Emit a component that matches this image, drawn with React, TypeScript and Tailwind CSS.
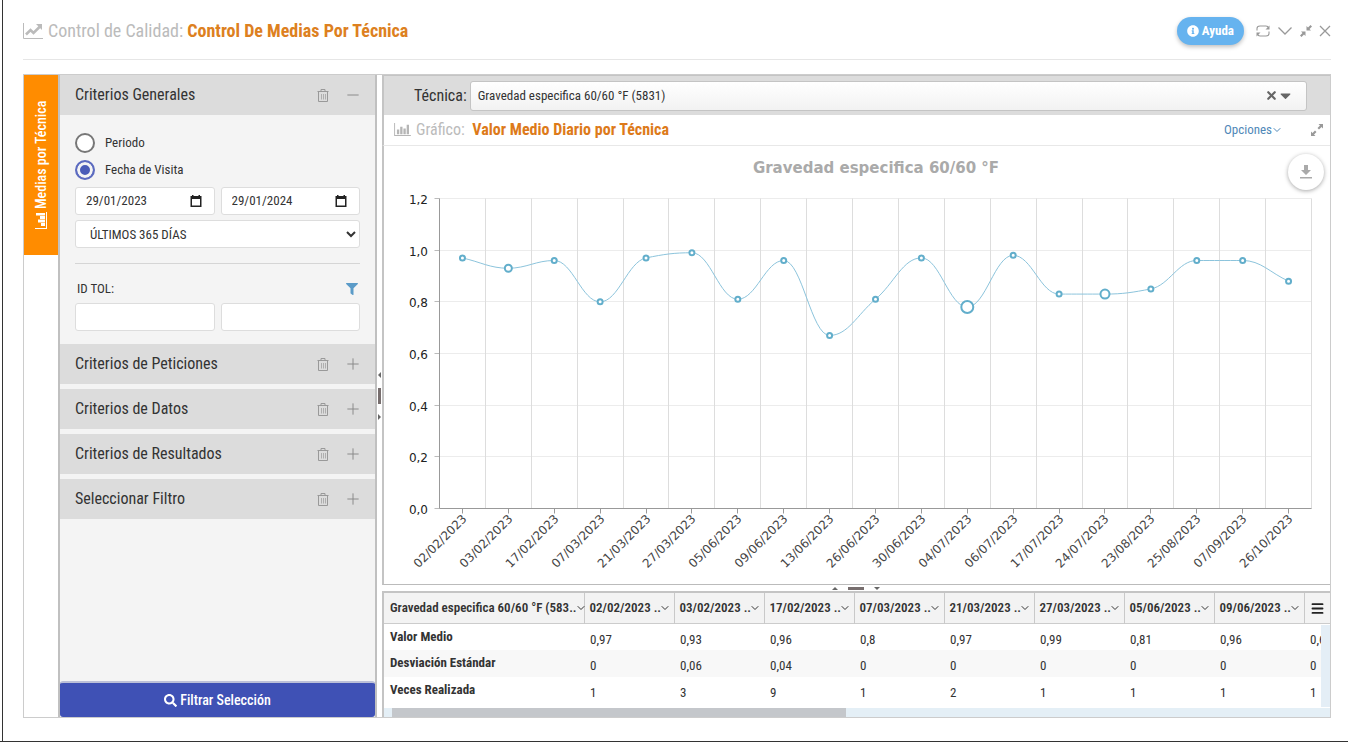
import { useState } from 'react'
import { FaCaretDown, FaFilter, FaInfoCircle, FaSearch } from 'react-icons/fa'
import { ChevronDown, Menu, Minus, Plus, X } from 'lucide-react'

const POINTS = [
  { date: '02/02/2023', value: 0.97, count: 1 },
  { date: '03/02/2023', value: 0.93, count: 3 },
  { date: '17/02/2023', value: 0.96, count: 1 },
  { date: '07/03/2023', value: 0.8, count: 1 },
  { date: '21/03/2023', value: 0.97, count: 1 },
  { date: '27/03/2023', value: 0.99, count: 1 },
  { date: '05/06/2023', value: 0.81, count: 1 },
  { date: '09/06/2023', value: 0.96, count: 1 },
  { date: '13/06/2023', value: 0.67, count: 1 },
  { date: '26/06/2023', value: 0.81, count: 1 },
  { date: '30/06/2023', value: 0.97, count: 1 },
  { date: '04/07/2023', value: 0.78, count: 9 },
  { date: '06/07/2023', value: 0.98, count: 1 },
  { date: '17/07/2023', value: 0.83, count: 1 },
  { date: '24/07/2023', value: 0.83, count: 5 },
  { date: '23/08/2023', value: 0.85, count: 1 },
  { date: '25/08/2023', value: 0.96, count: 1 },
  { date: '07/09/2023', value: 0.96, count: 1 },
  { date: '26/10/2023', value: 0.88, count: 1 },
]

const COLUMNS = [
  '02/02/2023', '03/02/2023', '17/02/2023', '07/03/2023',
  '21/03/2023', '27/03/2023', '05/06/2023', '09/06/2023',
]

const ROWS = [
  { name: 'Valor Medio', values: ['0,97', '0,93', '0,96', '0,8', '0,97', '0,99', '0,81', '0,96', '0,67'] },
  { name: 'Desviación Estándar', values: ['0', '0,06', '0,04', '0', '0', '0', '0', '0', '0'] },
  { name: 'Veces Realizada', values: ['1', '3', '9', '1', '2', '1', '1', '1', '1'] },
]

const SECTIONS = ['Criterios de Peticiones', 'Criterios de Datos', 'Criterios de Resultados', 'Seleccionar Filtro']

function LineIcon({ className }: { className: string }) {
  return (
    <svg viewBox="0 0 20 16" className={className} fill="none" stroke="currentColor">
      <path d="M.5 0v15.5H20" strokeWidth="1" />
      <path d="M3 11.5l4.5-4.5 3 3L17 3.5" strokeWidth="2.6" />
      <path d="M13 1h6v6z" fill="currentColor" stroke="none" />
    </svg>
  )
}

function BarsIcon({ className }: { className: string }) {
  return (
    <svg viewBox="0 0 18 14" className={className} fill="currentColor">
      <path d="M0 0h1v13h17v1H0zM3 7h2.500v5H3zM6.500 4H9v8H6.500zM10 6h2.500v6H10zM13.500 2H16v10h-2.500z" />
    </svg>
  )
}

function ResizeIcon({ inward, className }: { inward?: boolean; className: string }) {
  return (
    <svg viewBox="0 0 12 12" className={className} fill="currentColor">
      {inward ? (
        <path d="M6.500 1v4.500H11L9.500 4 12 1.500 10.500 0 8 2.500zM5.500 11V6.500H1L2.500 8 0 10.500 1.500 12 4 9.500z" />
      ) : (
        <path d="M7.500 0H12v4.500L10.500 3 8 5.500 6.500 4 9 1.500zM4.500 12H0V7.500L1.500 9 4 6.500 5.500 8 3 10.500z" />
      )}
    </svg>
  )
}

function ReloadIcon() {
  return (
    <svg viewBox="0 0 14 14" className="h-[14px] w-[14px]" fill="none" stroke="currentColor" strokeWidth="1.1">
      <path d="M1 6.500V4.500Q1 2 4 2h6q2 0 2.500 2M13 7.500v2q0 2.500-3 2.500H4q-2 0-2.500-2" />
      <path d="M13.500 1.500v4H9.500zM.5 12.500v-4h4z" fill="currentColor" stroke="none" />
    </svg>
  )
}

function TrashIcon() {
  return (
    <svg viewBox="0 0 12 13" className="h-[13px] w-[12px]" fill="none" stroke="currentColor">
      <path d="M.5 2.500h11M4 2.500v-2h4v2M1.500 2.500v10h9v-10" />
      <path d="M4.500 5v5.500M6.500 5v5.500M8.500 5v5.500" strokeWidth="0.7" />
    </svg>
  )
}

function SectionHeader({ title, open }: { title: string; open?: boolean }) {
  return (
    <div className="flex h-[40px] shrink-0 items-center bg-[#dcdcdc] pr-[13px] pl-[15px] text-[#333]">
      <h2 className="flex-1 text-[16px]">{title}</h2>
      <button aria-label="Limpiar" className="mr-[15px] text-[#999]">
        <TrashIcon />
      </button>
      <button aria-label={open ? 'Contraer' : 'Expandir'} className="text-[#888]">
        {open ? <Minus className="h-[18px] w-[18px]" strokeWidth={1.25} /> : <Plus className="h-[18px] w-[18px]" strokeWidth={1.25} />}
      </button>
    </div>
  )
}

function DateField({ label, value }: { label: string; value: string }) {
  return (
    <div className="flex h-[28px] flex-1 items-center rounded-[3px] border border-[#ddd] bg-white pr-[12px] pl-[10px]">
      <input type="text" aria-label={label} defaultValue={value} className="w-full min-w-0 flex-1 text-[13px] outline-none" />
      <svg viewBox="0 0 12 12" className="h-[12px] w-[12px] shrink-0" fill="#222">
        <path d="M2 0h1.500v1h5V0H10v1h1.500v11H.5V1H2zM2 4v6.500h8V4z" fillRule="evenodd" />
      </svg>
    </div>
  )
}

const X0 = 55.5
const X1 = 927.5
const Y0 = 362.5
const Y1 = 52.5
const STEP = (X1 - X0) / POINTS.length
const px = (i: number) => X0 + STEP * (i + 0.5)
const py = (v: number) => Y0 - (v / 1.2) * (Y0 - Y1)

// Smoothed line: flat at every local extreme, averaged slope elsewhere
function linePath() {
  const ys = POINTS.map((p) => py(p.value))
  const slopes = ys.map((y, i) => {
    if (i === 0 || i === ys.length - 1) return null
    const a = y - ys[i - 1]
    const b = ys[i + 1] - y
    return a * b <= 0 ? 0 : (2 * a * b) / (a + b)
  })
  let d = `M${px(0)} ${ys[0]}`
  for (let i = 1; i < ys.length; i++) {
    const delta = ys[i] - ys[i - 1]
    const s0 = slopes[i - 1] ?? delta
    const s1 = slopes[i] ?? delta
    d += `C${px(i - 1) + STEP / 2.5} ${ys[i - 1] + s0 / 2.5} ${px(i) - STEP / 2.5} ${ys[i] - s1 / 2.5} ${px(i)} ${ys[i]}`
  }
  return d
}

function radius(count: number) {
  if (count >= 9) return 6
  if (count >= 5) return 4.5
  return count >= 3 ? 3.5 : 2.5
}

function Chart() {
  return (
    <svg viewBox="0 0 946 438" className="h-full w-full font-['DejaVu_Sans',sans-serif]" role="img" aria-label="Gravedad especifica 60/60 °F">
      <text x="492" y="27" textAnchor="middle" className="fill-[#aaa] text-[15px] font-bold">
        Gravedad especifica 60/60 °F
      </text>
      {[0, 0.2, 0.4, 0.6, 0.8, 1, 1.2].map((v) => {
        const y = Math.floor(py(v)) + 0.5
        return (
          <g key={v}>
            <line x1={X0} x2={X1} y1={y} y2={y} stroke="#ececec" />
            <line x1={X0 - 5} x2={X0} y1={y} y2={y} stroke="#bbb" />
            <text x="44" y={y + 5} textAnchor="end" className="fill-[#222] text-[12px]">
              {v.toFixed(1).replace('.', ',')}
            </text>
          </g>
        )
      })}
      {POINTS.map((p, i) => {
        const x = Math.floor(X0 + STEP * (i + 1)) + 0.5
        const tick = Math.floor(px(i)) + 0.5
        return (
          <g key={p.date}>
            <line x1={x} x2={x} y1={Y1} y2={Y0} stroke="#ddd" />
            <line x1={tick} x2={tick} y1={Y0} y2={Y0 + 5} stroke="#999" />
            <text transform={`translate(${tick + 5} ${Y0 + 11}) rotate(-45)`} textAnchor="end" className="fill-[#444] text-[12px]">
              {p.date}
            </text>
          </g>
        )
      })}
      <path d={`M${X0} ${Y1}V${Y0}H${X1}`} fill="none" stroke="#999" />
      <path d={linePath()} fill="none" stroke="#8cc4dc" />
      {POINTS.map((p, i) => (
        <circle key={p.date} cx={px(i)} cy={py(p.value)} r={radius(p.count)} fill="#fff" strokeWidth={2} className="stroke-[#62aecb]" />
      ))}
    </svg>
  )
}

function Criteria() {
  const [mode, setMode] = useState('visita')

  const radio = (id: string, label: string) => (
    <label className="flex h-[27px] items-center gap-[10px] text-[13px]">
      <input
        type="radio"
        name="modo"
        checked={mode === id}
        onChange={() => setMode(id)}
        className="h-[20px] w-[20px] appearance-none rounded-full border-2 border-[#777] bg-white checked:border-[#5c6bc0] checked:bg-[#4a5cb8] checked:shadow-[inset_0_0_0_3px_#f4f4f4]"
      />
      {label}
    </label>
  )

  return (
    <aside className="flex w-[319px] shrink-0 flex-col border-x-2 border-[#c0c0c0] bg-[#f4f4f4]">
      <SectionHeader title="Criterios Generales" open />
      <div className="px-[15px] pt-[14px] pb-[13px]">
        {radio('periodo', 'Periodo')}
        {radio('visita', 'Fecha de Visita')}
        <div className="mt-[4px] flex gap-[6px]">
          <DateField label="Desde" value="29/01/2023" />
          <DateField label="Hasta" value="29/01/2024" />
        </div>
        <select aria-label="Rango" className="mt-[5px] h-[28px] w-full rounded-[3px] border border-[#ddd] bg-white pl-[10px] text-[13px]">
          <option>ÚLTIMOS 365 DÍAS</option>
        </select>
        <hr className="mt-[15px] border-[#d5d5d5]" />
        <div className="mt-[15px] flex h-[20px] items-center justify-between pr-[2px] pl-[2px]">
          <label htmlFor="tol" className="text-[13px]">ID TOL:</label>
          <FaFilter className="h-[12px] w-[12px] text-[#5b9bc8]" />
        </div>
        <div className="mt-[4px] flex gap-[6px]">
          <input id="tol" className="h-[28px] min-w-0 flex-1 rounded-[3px] border border-[#ddd] bg-white px-2" />
          <input aria-label="ID TOL hasta" className="h-[28px] min-w-0 flex-1 rounded-[3px] border border-[#ddd] bg-white px-2" />
        </div>
      </div>
      <div className="flex flex-1 flex-col gap-[5px]">
        {SECTIONS.map((s) => (
          <SectionHeader key={s} title={s} />
        ))}
      </div>
      <button className="flex h-[36px] items-center justify-center gap-[3px] rounded-[3px] border-t-2 border-[#bcc0d8] bg-[#3f51b5] text-[14px] font-medium text-white">
        <FaSearch className="h-[13px] w-[13px]" />
        Filtrar Selección
      </button>
    </aside>
  )
}

function ResultsTable() {
  return (
    <div className="relative h-[126px] shrink-0 overflow-hidden border-t-2 border-l-2 border-[#c4c4c4] bg-white">
      <table className="w-[1010px] table-fixed border-collapse text-left text-[13px] text-[#333]">
        <thead>
          <tr className="h-[30px] border-b border-[#ccc] bg-[#f3f3f3]">
            <th className="w-[200px] border-r border-[#c9c9c9] p-0 pl-[6px] font-semibold">
              <div className="flex items-center whitespace-nowrap">
                Gravedad especifica 60/60 °F (583..
                <ChevronDown className="-ml-[2px] h-[12px] w-[12px] shrink-0" strokeWidth={2} />
              </div>
            </th>
            {COLUMNS.map((c) => (
              <th key={c} className="w-[90px] border-r border-[#c9c9c9] p-0 pl-[5px] font-semibold">
                <div className="flex items-center whitespace-nowrap">
                  {c} ..
                  <ChevronDown className="-ml-[2px] h-[12px] w-[12px] shrink-0" strokeWidth={2} />
                </div>
              </th>
            ))}
            <th className="w-[90px]" />
          </tr>
        </thead>
        <tbody>
          {ROWS.map((r) => (
            <tr key={r.name} className="h-[27px] even:bg-[#f8f8f8]">
              <th scope="row" className="px-[6px] pb-[1px] font-bold">{r.name}</th>
              {r.values.map((v, i) => (
                <td key={i} className="pt-[5px] pl-[6px]">{v}</td>
              ))}
            </tr>
          ))}
        </tbody>
      </table>
      <button aria-label="Menú" className="absolute top-0 right-0 flex h-[30px] w-[25px] items-center justify-center bg-[#f3f3f3] text-[#222]">
        <Menu className="h-[15px] w-[15px]" strokeWidth={3} />
      </button>
      <div className="absolute top-[32px] right-0 h-[82px] w-[9px] bg-[#e4eef6]" />
      <div className="absolute inset-x-0 bottom-0 h-[9px] bg-[#e4eff6]">
        <div className="ml-[8px] h-full w-[48%] bg-[#c4c7cb]" />
      </div>
    </div>
  )
}

export default function App() {
  return (
    <div className="flex min-h-screen flex-col border-b border-b-[#333] bg-white pl-[2px] font-['Roboto_Condensed','Liberation_Sans_Narrow',Roboto,sans-serif] text-[#333]">
      <div className="flex flex-1 flex-col border-l border-[#333] pr-[17px] pb-[23px] pl-[20px]">
        <header className="flex h-[60px] items-center border-b border-[#e6e6e6] pt-[2px]">
          <LineIcon className="mr-[5px] h-[16px] w-[20px] text-[#bbb]" />
          <h1 className="flex-1 text-[18px] text-[#bbb]">
            Control de Calidad: <strong className="font-bold text-[#dd8020]">Control De Medias Por Técnica</strong>
          </h1>
          <button className="mr-[12px] flex h-[28px] items-center gap-[3px] rounded-full bg-[#66b3ef] px-[10px] text-[13px] font-bold text-white shadow-[0_2px_4px_rgba(0,0,0,0.25)]">
            <FaInfoCircle className="h-[12px] w-[12px]" />
            Ayuda
          </button>
          <div className="flex items-center gap-[7px] text-[#999]">
            <button aria-label="Recargar"><ReloadIcon /></button>
            <button aria-label="Minimizar">
              <svg viewBox="0 0 16 10" className="h-[10px] w-[16px]" fill="none" stroke="currentColor" strokeWidth="1.3">
                <path d="M1.500 1.500L8 8l6.500-6.500" />
              </svg>
            </button>
            <button aria-label="Reducir"><ResizeIcon inward className="h-[12px] w-[12px]" /></button>
            <button aria-label="Cerrar">
              <svg viewBox="0 0 12 12" className="h-[12px] w-[12px]" fill="none" stroke="currentColor" strokeWidth="1.3">
                <path d="M1 1l10 10M11 1L1 11" />
              </svg>
            </button>
          </div>
        </header>

        <div className="mt-[14px] flex min-h-[644px] flex-1 border border-[#ccc]">
          <nav className="w-[34px] shrink-0">
            <button className="flex h-[180px] w-[34px] rotate-180 items-center justify-center gap-[3px] bg-[#ff8c00] text-[14px] font-medium text-white [writing-mode:vertical-rl]">
              <svg viewBox="0 0 12 17" className="h-[17px] w-[12px] shrink-0" fill="currentColor">
                <path d="M12 0v1H1v16H0V0zM2 3h4v3H2zM2 6.500h7v3H2zM2 10h5v3H2zM2 13.500h9v2.500H2z" />
              </svg>
              Medias por Técnica
            </button>
          </nav>
          <Criteria />
          <div className="flex w-[5px] shrink-0 flex-col items-center justify-center gap-[10px] text-[#666]">
            <span className="h-0 w-0 border-y-3 border-r-3 border-y-transparent border-r-[#666]" />
            <span className="h-[16px] w-[3px] bg-[#776e6e]" />
            <span className="h-0 w-0 border-y-3 border-l-3 border-y-transparent border-l-[#666]" />
          </div>

          <main className="flex min-w-0 flex-1 flex-col">
            <div className="flex h-[40px] shrink-0 items-center border-t border-l-2 border-[#c4c4c4] bg-[#dcdcdc] pr-[23px] pl-[30px]">
              <span className="mr-[3px] text-[16px]">Técnica:</span>
              <button className="flex h-[30px] flex-1 items-center rounded-[3px] border border-[#c4c4c4] bg-linear-to-b from-white to-[#f2f2f2] pr-[14px] pl-[7px] text-left text-[13px]">
                <span className="flex-1">Gravedad especifica 60/60 °F (5831)</span>
                <X className="h-[13px] w-[13px] text-[#666]" strokeWidth={4} />
                <FaCaretDown className="ml-[1px] h-[17px] w-[13px] text-[#666]" />
              </button>
            </div>
            <div className="flex h-[31px] shrink-0 items-center border-b border-l-2 border-b-[#e8e8e8] border-l-[#c4c4c4] pr-[7px] pb-[1px] pl-[10px]">
              <BarsIcon className="mr-[5px] h-[13px] w-[17px] text-[#b5b5b5]" />
              <h2 className="flex-1 text-[16px] text-[#bbb]">
                Gráfico: <strong className="ml-[4px] font-bold text-[#dd7a1a]">Valor Medio Diario por Técnica</strong>
              </h2>
              <button className="mr-[28px] flex items-center text-[13px] text-[#5088b8]">
                Opciones
                <ChevronDown className="-ml-[1px] h-[12px] w-[12px]" strokeWidth={2} />
              </button>
              <button aria-label="Ampliar"><ResizeIcon className="h-[12px] w-[12px] text-[#999]" /></button>
            </div>
            <div className="relative min-h-0 flex-1 border-b border-l-2 border-b-[#bbb] border-l-[#c4c4c4]">
              <Chart />
              <button aria-label="Descargar" className="absolute top-[8px] right-[6px] flex h-[36px] w-[36px] items-center justify-center rounded-full bg-white text-[#aaa] shadow-[0_1px_4px_rgba(0,0,0,0.35)]">
                <svg viewBox="0 0 12 14" className="h-[14px] w-[12px]" fill="currentColor">
                  <path d="M4 0h4v5h3L6 10 1 5h3zM0 12h12v1.500H0z" />
                </svg>
              </button>
            </div>
            <div className="flex h-[6px] shrink-0 items-center justify-center gap-[10px]">
              <span className="h-0 w-0 border-x-3 border-b-3 border-x-transparent border-b-[#666]" />
              <span className="h-[3px] w-[16px] bg-[#776e6e]" />
              <span className="h-0 w-0 border-x-3 border-t-3 border-x-transparent border-t-[#666]" />
            </div>
            <ResultsTable />
          </main>
        </div>
      </div>
    </div>
  )
}
